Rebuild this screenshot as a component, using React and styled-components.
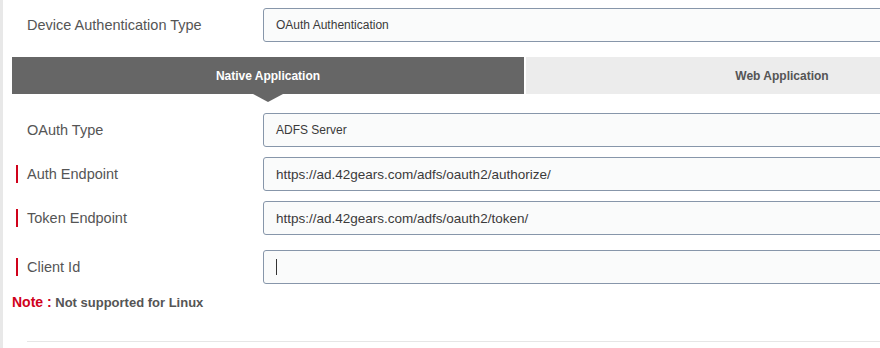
import React from 'react';
import styled, { createGlobalStyle } from 'styled-components';

const GlobalStyle = createGlobalStyle`
  body {
    margin: 0;
    background: #ffffff;
    overflow: hidden;
    font-family: "Liberation Sans", Arial, sans-serif;
  }
`;

const Page = styled.div`
  border-left: 3px solid #e8e8e8;
  height: 348px;
  box-sizing: border-box;
  padding: 8px 0 0 9px;
  width: 1060px;
`;

const Row = styled.div`
  display: flex;
  align-items: center;
  height: 34px;
  margin-bottom: ${(props) => props.gap || 10}px;
`;

const Label = styled.div`
  position: relative;
  width: 251px;
  flex-shrink: 0;
  box-sizing: border-box;
  padding-left: 15px;
  font-size: 14.5px;
  color: #555555;

  &::before {
    content: '';
    display: ${(props) => (props.required ? 'block' : 'none')};
    position: absolute;
    left: 4px;
    top: 50%;
    margin-top: -9px;
    width: 2px;
    height: 18px;
    background: #d0021b;
  }
`;

const Field = styled.div`
  flex: 1;
  height: 34px;
  box-sizing: border-box;
  border: 1px solid #8796aa;
  border-radius: 3px;
  background: #fafbfb;
  display: flex;
  align-items: center;
  padding-left: 12px;
  font-size: ${(props) => (props.select ? 12 : 13.5)}px;
  color: #3a3a3a;
`;

const Caret = styled.span`
  display: inline-block;
  width: 1px;
  height: 16px;
  background: #333333;
`;

const Tabs = styled.div`
  display: flex;
  gap: 2px;
  margin: 15px 0 19px 0;
`;

const Tab = styled.div`
  position: relative;
  width: 512px;
  height: 37px;
  display: flex;
  align-items: center;
  justify-content: center;
  font-size: 12px;
  font-weight: 700;
  background: ${(props) => (props.active ? '#666666' : '#ececec')};
  color: ${(props) => (props.active ? '#ffffff' : '#555555')};

  &::after {
    content: '';
    display: ${(props) => (props.active ? 'block' : 'none')};
    position: absolute;
    left: 50%;
    bottom: -8px;
    margin-left: -15px;
    border-left: 15px solid transparent;
    border-right: 15px solid transparent;
    border-top: 8px solid #666666;
  }
`;

const Note = styled.div`
  margin-top: 8px;
  font-size: 13px;
  font-weight: 700;
  color: #555555;

  span {
    color: #d0021b;
    font-size: 14px;
  }
`;

const Divider = styled.div`
  margin: 31px 0 0 15px;
  border-top: 1px solid #e6e6e6;
`;

export default function App() {
  return (
    <>
      <GlobalStyle />
      <Page>
        <Row gap={0}>
          <Label>Device Authentication Type</Label>
          <Field select>OAuth Authentication</Field>
        </Row>
        <Tabs>
          <Tab active>Native Application</Tab>
          <Tab>Web Application</Tab>
        </Tabs>
        <Row>
          <Label>OAuth Type</Label>
          <Field select>ADFS Server</Field>
        </Row>
        <Row>
          <Label required>Auth Endpoint</Label>
          <Field>https://ad.42gears.com/adfs/oauth2/authorize/</Field>
        </Row>
        <Row gap={15}>
          <Label required>Token Endpoint</Label>
          <Field>https://ad.42gears.com/adfs/oauth2/token/</Field>
        </Row>
        <Row gap={0}>
          <Label required>Client Id</Label>
          <Field><Caret /></Field>
        </Row>
        <Note><span>Note :</span> Not supported for Linux</Note>
        <Divider />
      </Page>
    </>
  );
}
